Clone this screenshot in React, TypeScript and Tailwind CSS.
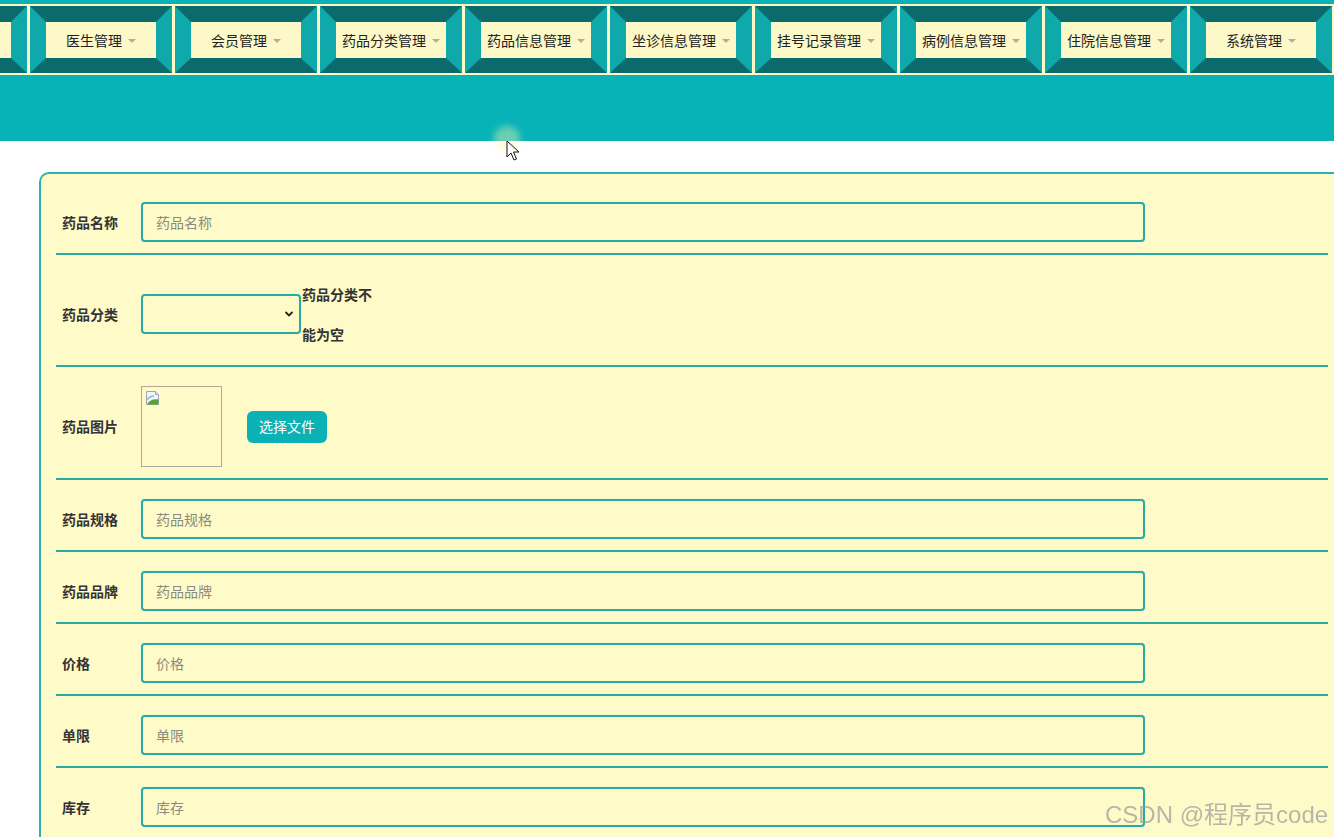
import React from "react";

const navItems = [
  "",
  "医生管理",
  "会员管理",
  "药品分类管理",
  "药品信息管理",
  "坐诊信息管理",
  "挂号记录管理",
  "病例信息管理",
  "住院信息管理",
  "系统管理",
];

function NavItem({ label }: { label: string }) {
  return (
    <div className="shrink-0 w-[142px] border-t-[16px] border-b-[15px] border-x-[16px] border-t-[#0b6a6c] border-b-[#0b6a6c] border-x-[#10a9ab]">
      <div className="h-[36px] bg-[#fdf8c8] flex items-center justify-center text-[14px] text-[#222] whitespace-nowrap">
        {label ? (
          <>
            <span>{label}</span>
            <span className="ml-[6px] mt-[1px] w-0 h-0 border-l-[4px] border-r-[4px] border-t-[4px] border-l-transparent border-r-transparent border-t-[#b5ad9c]" />
          </>
        ) : null}
      </div>
    </div>
  );
}

function TextRow({ label }: { label: string }) {
  return (
    <div className="flex items-center border-b-2 border-[#2aa9a5] pt-[19px] pb-[11px] pl-[6px]">
      <div className="w-[79px] shrink-0 text-[14px] font-bold text-[#333]">{label}</div>
      <input
        className="w-[1004px] h-[40px] border-2 border-[#2aaaa6] rounded-[4px] bg-[#fffbc8] px-[13px] text-[14px] text-[#333] placeholder:text-[#8a8a80] outline-none shadow-[0_0_1px_#7ff0e6]"
        placeholder={label}
      />
    </div>
  );
}

function BrokenImage() {
  return (
    <svg width="16" height="16" viewBox="0 0 16 16" className="absolute left-[3px] top-[3px]">
      <path d="M1.5 1.5h9l3 3v10h-12z" fill="#f2f4f6" stroke="#9aa6b2" />
      <path d="M10.5 1.5v3h3" fill="#dfe5ea" stroke="#9aa6b2" />
      <path d="M2 14.5c2-4 6-6 11.5-5v5z" fill="#5c9d3c" />
      <path d="M2 10c2-3 5-4 7-4" fill="none" stroke="#8fb9e0" strokeWidth="1.5" />
    </svg>
  );
}

export default function App() {
  return (
    <div
      className="relative w-full h-[837px] overflow-hidden bg-white"
      style={{ fontFamily: '"Microsoft YaHei", "Noto Sans CJK SC", "Noto Sans", sans-serif' }}
    >
      {/* Top nav */}
      <div className="h-[4px] bg-[#09b2b6]" />
      <div className="bg-[#fdf9c6] py-[2px] overflow-hidden">
        <div className="flex gap-[3px] ml-[-115px]">
          {navItems.map((n, i) => (
            <NavItem key={i} label={n} />
          ))}
        </div>
      </div>
      <div className="h-[66px] bg-[#08b3b7]" />

      {/* Form card */}
      <div className="ml-[39px] mt-[31px] w-[1304px] border-2 border-r-0 border-b-0 border-[#2bb3b1] rounded-tl-[10px] bg-[#fffbc8] px-[15px] pt-[9px]">
        <TextRow label="药品名称" />

        <div className="flex items-center border-b-2 border-[#2aa9a5] pt-[19px] pb-[11px] pl-[6px]">
          <div className="w-[79px] shrink-0 text-[14px] font-bold text-[#333]">药品分类</div>
          <div className="relative w-[160px] h-[40px] border-2 border-[#2aaaa6] rounded-[4px] bg-[#fffbc8]">
            <svg
              width="10"
              height="10"
              viewBox="0 0 10 10"
              className="absolute right-[5px] top-[13px]"
            >
              <path d="M1.5 3l3.5 3.5 3.5-3.5" fill="none" stroke="#222" strokeWidth="1.8" />
            </svg>
          </div>
          <div className="ml-[1px] text-[14px] font-bold text-[#333] leading-[40px]">
            <div>药品分类不</div>
            <div>能为空</div>
          </div>
        </div>

        <div className="flex items-center border-b-2 border-[#2aa9a5] pt-[19px] pb-[11px] pl-[6px]">
          <div className="w-[79px] shrink-0 text-[14px] font-bold text-[#333]">药品图片</div>
          <div className="relative w-[81px] h-[81px] border border-[#b0ab98]">
            <BrokenImage />
          </div>
          <button className="ml-[25px] w-[80px] h-[32px] rounded-[6px] bg-[#0ab2b5] text-white text-[14px]">
            选择文件
          </button>
        </div>

        <TextRow label="药品规格" />
        <TextRow label="药品品牌" />
        <TextRow label="价格" />
        <TextRow label="单限" />
        <TextRow label="库存" />
      </div>

      {/* Mouse cursor */}
      <div className="absolute left-[494px] top-[126px] w-[26px] h-[26px] rounded-full bg-[#fff6b0] opacity-40 blur-[3px]" />
      <svg width="14" height="22" viewBox="0 0 14 22" className="absolute left-[506px] top-[140px]">
        <path
          d="M1 1v16l4-4 3 7 2.5-1-3-7h5.5z"
          fill="#fff"
          stroke="#111"
          strokeWidth="1"
          strokeLinejoin="round"
        />
      </svg>

      {/* Watermark */}
      <div
        className="absolute left-[1105px] top-[797px] text-[24px] text-[#9a9a9a] opacity-70 whitespace-nowrap"
        style={{ fontFamily: '"Liberation Sans", "Noto Sans CJK SC", sans-serif' }}
      >
        CSDN @程序员code
      </div>
    </div>
  );
}
